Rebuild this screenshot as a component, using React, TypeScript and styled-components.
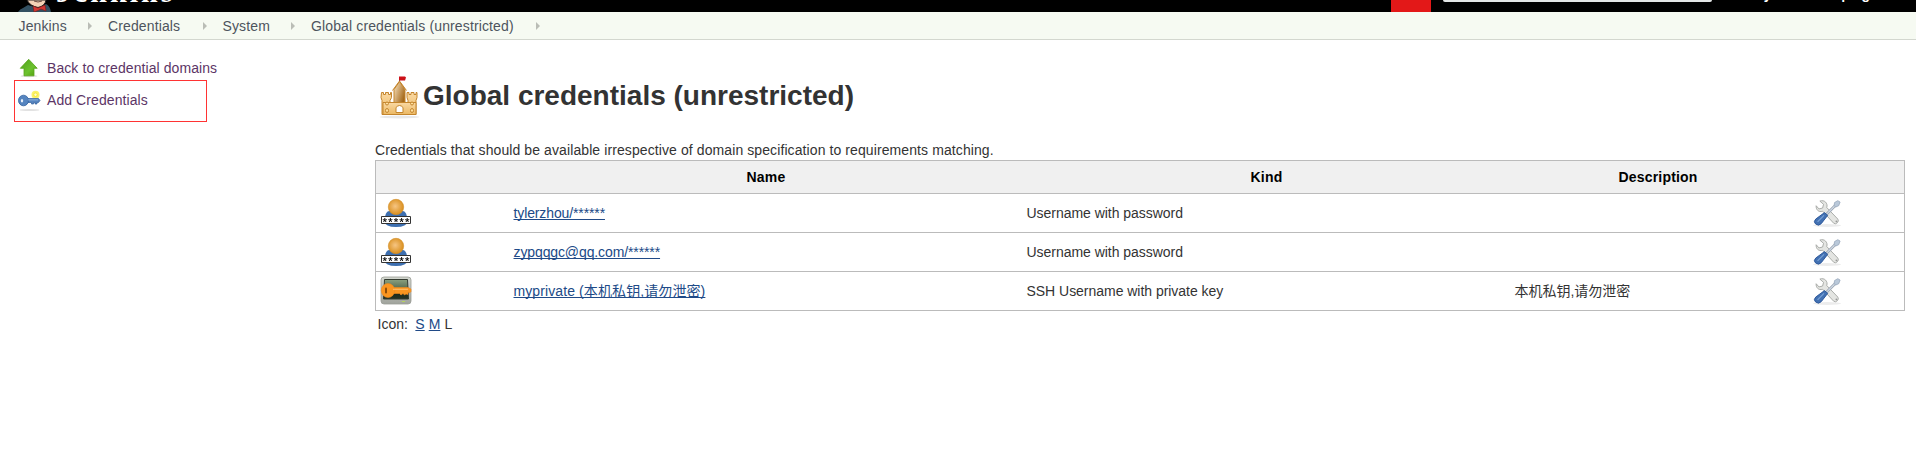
import React from 'react';
import styled, { createGlobalStyle } from 'styled-components';

const Global = createGlobalStyle`
  * { box-sizing: border-box; }
  body {
    margin: 0;
    background: #fff;
    color: #333;
    font: 14px/20px "Liberation Sans", "Noto Sans CJK SC", sans-serif;
    overflow: hidden;
  }
`;

const Header = styled.header`
  display: flex;
  align-items: flex-start;
  height: 12px;
  padding-left: 18px;
  background: #000;
  overflow: hidden;
`;
const Mascot = styled.svg`
  flex: none;
  display: block;
`;
const Brand = styled.span`
  flex: 1;
  margin: -23px 0 0 5px;
  color: #fff;
  font: bold 30px/29px "Liberation Serif", serif;
  letter-spacing: 3px;
`;
const Alerts = styled.div`
  width: 40px;
  height: 12px;
  margin-right: 12px;
  background: #e31818;
`;
const Search = styled.div`
  width: 269px;
  height: 2px;
  margin-right: 47px;
  background: #e3e6e6;
  border-radius: 0 0 3px 3px;
`;
const User = styled.div`
  display: flex;
  gap: 20px;
  width: 157px;
  margin-top: -16px;
  color: #fff;
  font-weight: bold;
  white-space: pre;
`;

const Crumbs = styled.nav`
  display: flex;
  align-items: center;
  height: 28px;
  padding-left: 18.5px;
  background: #f6faf2;
  border-bottom: 1px solid #d3d7cf;
  color: #4d545d;
`;
const Crumb = styled.a<{ $width: number }>`
  width: ${p => p.$width}px;
  letter-spacing: 0.13px;
  white-space: nowrap;
`;
const Arrow = styled.i`
  border: 4px solid transparent;
  border-left-color: #babdb6;
  border-right: 0;
  margin-right: 16px;
`;

const Page = styled.div`
  display: flex;
`;
const Side = styled.aside`
  width: 375px;
  padding: 17px 0 0 14px;
`;
const Task = styled.a<{ $marked?: boolean }>`
  display: flex;
  align-items: flex-start;
  width: ${p => (p.$marked ? '193px' : '230px')};
  height: ${p => (p.$marked ? '42px' : '23px')};
  padding: ${p => (p.$marked ? '9px 0 0 3px' : '1px 0 0 4px')};
  border: ${p => (p.$marked ? '1px solid #f33' : '0')};
  color: #5c3566;
  letter-spacing: 0.08px;
  svg { flex: none; margin-right: 5px; }
`;

const Main = styled.main`
  width: 1530px;
  padding-top: 32px;
`;
const Title = styled.h1`
  display: flex;
  align-items: center;
  height: 48px;
  margin: 0 0 20px;
  font-size: 28px;
  line-height: 34px;
`;
const Note = styled.p`
  margin: 0;
  height: 20px;
  letter-spacing: 0.095px;
`;
const Table = styled.table`
  width: 1530px;
  border-collapse: collapse;
  table-layout: fixed;
  border: 1px solid #bbb;
`;
const Row = styled.tr<{ $head?: boolean }>`
  height: ${p => (p.$head ? 33 : 39)}px;
  background: ${p => (p.$head ? '#f0f0f0' : '#fff')};
  border-bottom: 1px solid #bbb;
`;
const Heading = styled.th`
  padding: 0;
  color: #000;
  text-align: center;
  letter-spacing: 0.2px;
`;
const Cell = styled.td`
  padding: 0 0 0 4px;
  letter-spacing: -0.03px;
  svg { display: block; }
`;
const Link = styled.a<{ $tracking?: number }>`
  color: #204a87;
  text-decoration: underline;
  text-decoration-skip-ink: none;
  letter-spacing: ${p => p.$tracking ?? 0}px;
`;
const Sizes = styled.div`
  display: flex;
  gap: 4px;
  padding: 3px 0 0 2.5px;
`;
const Label = styled.span`
  margin-right: 3.5px;
`;

const Castle = () => (
  <svg width="48" height="48" viewBox="0 0 48 48">
    <defs>
      <linearGradient id="tower" x1="0" x2="1" y2=".6">
        <stop offset="0" stopColor="#fbe6c4" /><stop offset="1" stopColor="#a56a1c" />
      </linearGradient>
      <linearGradient id="wall" x2="0" y2="1">
        <stop stopColor="#fad9a3" /><stop offset="1" stopColor="#ebb863" />
      </linearGradient>
    </defs>
    <g transform="translate(.5 2)">
      <ellipse cx="24" cy="43" rx="20" ry="1.500" fill="#e8e8e8" />
      <path d="M24 7V3" stroke="#777" />
      <path d="M23.500 2.500h6l1 1-1 3h-6z" fill="#cc1018" />
      <g stroke="#c4852c" strokeLinejoin="round">
        <path d="M18.500 29V15.500l5.500-8 5.500 8V29z" fill="url(#tower)" />
        <path d="M17 16.500l7-9.500 7 9.500" fill="none" />
        <path d="M6 18.500h2v2h2v-2h3v2h2v-2h1v5l-1.500 3v14h-8v-14l-1-3z" fill="url(#wall)" />
        <path d="M31.500 18.500h2v2h2v-2h3v2h2v-2h1v5l-1 3v14h-8v-14l-1-3z" fill="url(#wall)" />
        <path d="M7.500 28.500h33v12h-33z" fill="url(#wall)" />
        <path d="M20.500 38.500v-5q3.500-4 7 0v5z" fill="#fff" />
        <g fill="#ffe1a2"><circle cx="11.500" cy="29.500" r="1.500" /><circle cx="36.500" cy="29.500" r="1.500" /><ellipse cx="11.500" cy="36.500" rx="1.500" ry="2" /><ellipse cx="36.500" cy="36.500" rx="1.500" ry="2" /></g>
      </g>
    </g>
  </svg>
);

const Person = () => (
  <svg width="32" height="32" viewBox="0 0 32 32">
    <defs>
      <radialGradient id="head" cx=".45" cy=".45">
        <stop stopColor="#f6c583" /><stop offset="1" stopColor="#dc9427" />
      </radialGradient>
    </defs>
    <path d="M4.500 24Q5 14.500 9 14h14q4 .5 4.500 10-.5 6-11.500 6T4.500 24z" fill="#3d6fb0" />
    <circle cx="16" cy="10" r="7.700" fill="url(#head)" stroke="#d18d25" strokeWidth=".6" />
    <path d="M1.500 19.500h29v7h-29z" fill="#fff" stroke="#333" />
    {[4.800, 10.400, 16, 21.600, 27.200].map(x => (
      <path key={x} d={`M${x} 21v2.200M${x - 2} 22.600l2 .6 2-.6M${x - 1.300} 25l1.300-1.800 1.300 1.800`} stroke="#000" strokeWidth=".95" fill="none" />
    ))}
  </svg>
);

const SshKey = () => (
  <svg width="32" height="32" viewBox="0 0 32 32">
    <defs>
      <linearGradient id="screen" x2="0" y2="1">
        <stop stopColor="#8ba17f" /><stop offset=".5" stopColor="#52674d" /><stop offset=".5" stopColor="#172216" /><stop offset="1" stopColor="#263424" />
      </linearGradient>
      <linearGradient id="case" x2="0" y2="1">
        <stop stopColor="#d3d7cf" /><stop offset="1" stopColor="#a0a39c" />
      </linearGradient>
    </defs>
    <rect x="1" y="2" width="30" height="27" rx="3" fill="url(#case)" stroke="#999c96" strokeWidth=".8" />
    <path d="M4.500 4.500h23l1 19.500h-25z" fill="url(#screen)" stroke="#343b31" />
    <g fill="#fa9520" stroke="#f08a1c" strokeWidth=".6">
      <path d="M13 12.500h15l3 1.500v2.500l-1.500 1.500-1.500-1v2.500l-2-.5-1.500 1-1.500-1.500-2 1.500-1.500-1.500H13z" />
      <ellipse cx="8" cy="15.500" rx="6.700" ry="7" />
    </g>
    <path d="M13 14.300h15" stroke="#ffc06f" />
    <path d="M6 13.500v4" stroke="#8a4c0a" strokeWidth="2" strokeLinecap="round" />
    <path d="M22 26.500h3" stroke="#b5d45b" />
  </svg>
);

const Tools = () => (
  <svg width="32" height="32" viewBox="0 0 32 32">
    <ellipse cx="17" cy="28.500" rx="14" ry="1.400" fill="#ececec" />
    <g transform="translate(2.500 .900) scale(.92)">
      <path d="M8 3.500l4 3.500-1 4-4 1-3-3.500c-.5 4 2.500 7.500 7 6l12 13q2 1.500 4-.5t.5-4L15.500 10.500C17 6 13 1.500 8 3.500z" fill="#e4e5e2" stroke="#a5a7a3" />
      <circle cx="26" cy="25.500" r="1" fill="#999" />
      <path d="M14 19l11-11" stroke="#97a2b0" strokeWidth="3" />
      <path d="M14 19l11-11" stroke="#d1dae5" strokeWidth="1.300" />
      <path d="M23.500 8l.5-3 3.500-2 2.500 1.500-1.500 4-3.500 1.500z" fill="#b9c8d9" stroke="#93a4b8" strokeWidth=".8" />
      <path d="M13 16l3.500 3L9.500 28q-3 3-6 .5t0-5.500z" fill="#4371b2" stroke="#2b569a" />
      <path d="M12.500 19l-7 7" stroke="#7ba3d8" strokeWidth="1.200" />
    </g>
  </svg>
);

const UpArrow = () => (
  <svg width="24" height="20" viewBox="0 0 24 20">
    <defs><linearGradient id="green" x2="1" y2="1"><stop stopColor="#4fa01b" /><stop offset=".6" stopColor="#6cc22f" /><stop offset="1" stopColor="#4e9a06" /></linearGradient></defs>
    <ellipse cx="11" cy="18" rx="8.500" ry="1.200" fill="#ddd" />
    <path d="M10.700 1.300l8.500 9H16v7.500H6v-7.500H2.300z" fill="url(#green)" stroke="#58a51c" strokeWidth=".8" />
  </svg>
);

const AddKey = () => (
  <svg width="24" height="22" viewBox="0 0 24 22">
    <ellipse cx="11.500" cy="20" rx="10" ry="1" fill="#e2e2e2" />
    <circle cx="17.500" cy="4.700" r="4" fill="#fcf36a" />
    <circle cx="17.500" cy="4.700" r="1.800" fill="#fffcd0" stroke="#f8e838" />
    <path d="M10 8.500h10.500l1.500 2-1.500 2H19v1.500h-2v-1.500h-1.500V14h-2v-1.500H10z" fill="#5584bf" stroke="#34629f" strokeWidth=".7" />
    <ellipse cx="5.500" cy="10.500" rx="5" ry="5.300" fill="#5584bf" stroke="#34629f" strokeWidth=".8" />
    <ellipse cx="4" cy="10.700" rx="1.200" ry="1.700" fill="#e8eff8" />
    <path d="M10 9.900h10" stroke="#8fb2dd" />
  </svg>
);

const rows = [
  { icon: <Person />, name: 'tylerzhou/******', tracking: -0.12, kind: 'Username with password', description: '' },
  { icon: <Person />, name: 'zypqqgc@qq.com/******', tracking: -0.11, kind: 'Username with password', description: '' },
  { icon: <SshKey />, name: 'myprivate (本机私钥,请勿泄密)', tracking: 0.1, kind: 'SSH Username with private key', description: '本机私钥,请勿泄密' },
];

export default function App() {
  return (
    <>
      <Global />
      <Header>
        <Mascot width="33" height="12" viewBox="0 0 33 12">
          <path d="M0 12q2-3 5-4l5-3 10 3 8-4q4 2 5 8z" fill="#335061" />
          <path d="M9 0h19q-1 6-8 7.500Q12 6 9 0z" fill="#f3d3b7" stroke="#262322" />
          <path d="M16 1q4 2 8 0" fill="none" stroke="#6b4b40" />
          <path d="M15 6l5 2 7-3 1 6-5-2-3 1.500-4 1.500z" fill="#d33833" stroke="#7c1b18" strokeWidth=".6" />
        </Mascot>
        <Brand>Jenkins</Brand>
        <Alerts />
        <Search />
        <User><span>tylerzhou</span><span>| log out</span></User>
      </Header>
      <Crumbs>
        <Crumb $width={69.5}>Jenkins</Crumb><Arrow />
        <Crumb $width={94.5}>Credentials</Crumb><Arrow />
        <Crumb $width={68.5}>System</Crumb><Arrow />
        <Crumb $width={225}>Global credentials (unrestricted)</Crumb><Arrow />
      </Crumbs>
      <Page>
        <Side>
          <Task><UpArrow />Back to credential domains</Task>
          <Task $marked><AddKey />Add Credentials</Task>
        </Side>
        <Main>
          <Title><Castle />Global credentials (unrestricted)</Title>
          <Note>Credentials that should be available irrespective of domain specification to requirements matching.</Note>
          <Table>
            <colgroup><col style={{ width: 134 }} /><col style={{ width: 513 }} /><col style={{ width: 488 }} /><col style={{ width: 295 }} /><col /></colgroup>
            <thead><Row $head><Heading /><Heading>Name</Heading><Heading>Kind</Heading><Heading>Description</Heading><Heading /></Row></thead>
            <tbody>
              {rows.map(r => (
                <Row key={r.name}>
                  <Cell>{r.icon}</Cell>
                  <Cell><Link $tracking={r.tracking}>{r.name}</Link></Cell>
                  <Cell>{r.kind}</Cell>
                  <Cell>{r.description}</Cell>
                  <Cell><Tools /></Cell>
                </Row>
              ))}
            </tbody>
          </Table>
          <Sizes><Label>Icon:</Label><Link>S</Link><Link>M</Link><span>L</span></Sizes>
        </Main>
      </Page>
    </>
  );
}
